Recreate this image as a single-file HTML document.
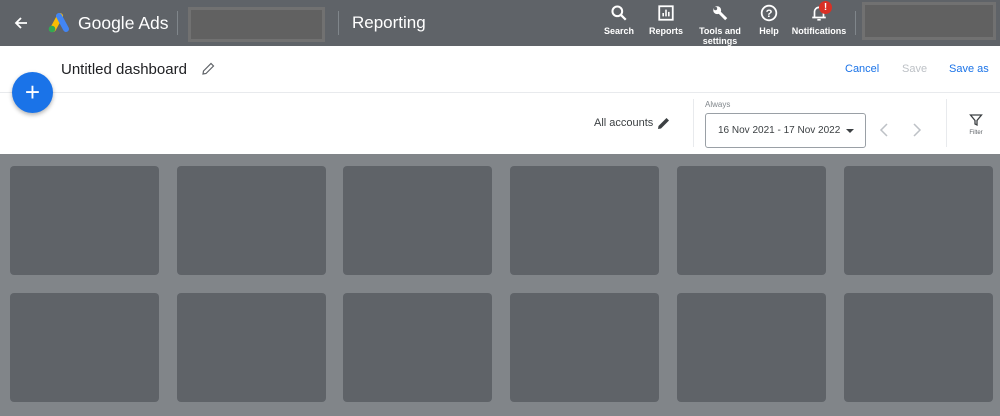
<!DOCTYPE html>
<html><head><style>
*{box-sizing:border-box;margin:0;padding:0}
body{width:1000px;height:416px;overflow:hidden;font-family:"Liberation Sans",Arial,sans-serif;background:#818589;position:relative}
.hdr{position:absolute;left:0;top:0;width:1000px;height:46px;background:#5f6368;color:#fff}
.abs{position:absolute}
.nav{position:absolute;top:4px;text-align:center;font-size:9px;font-weight:bold;color:#fff;line-height:10px}
.nav svg{margin-bottom:2px}
.white{position:absolute;left:0;top:46px;width:1000px;height:108px;background:#fff}
.tile{position:absolute;width:149px;height:109px;background:#5f6368;border-radius:4px}
</style></head><body>
<div class="hdr">
 <svg class="abs" style="left:13px;top:15px" width="16" height="16" viewBox="0 0 16 16"><path d="M14 8H3M8 3L3 8l5 5" stroke="#fff" stroke-width="1.8" fill="none"/></svg>
 <svg class="abs" style="left:47px;top:12px" width="23" height="21" viewBox="0 0 23 21"><path d="M6 17L13 4" stroke="#fbbc04" stroke-width="6" stroke-linecap="round"/><path d="M12 4l7 13" stroke="#4285f4" stroke-width="6" stroke-linecap="round"/><circle cx="5" cy="17" r="3.3" fill="#34a853"/></svg>
 <div class="abs" style="left:78px;top:13px;font-size:17.5px;color:#fff">Google Ads</div>
 <div class="abs" style="left:177px;top:11px;width:1px;height:24px;background:#80868b"></div>
 <div class="abs" style="left:188px;top:7px;width:137px;height:35px;background:#616161;border:3px solid #717171"></div>
 <div class="abs" style="left:338px;top:11px;width:1px;height:24px;background:#80868b"></div>
 <div class="abs" style="left:352px;top:13px;font-size:17px;color:#fff">Reporting</div>
 <div class="nav" style="left:600px;width:38px"><svg width="18" height="18" viewBox="0 0 16 16"><circle cx="6.5" cy="6.5" r="4.3" stroke="#fff" stroke-width="1.8" fill="none"/><path d="M9.5 9.5L14 14" stroke="#fff" stroke-width="2"/></svg><br>Search</div>
 <div class="nav" style="left:646px;width:40px"><svg width="18" height="18" viewBox="0 0 16 16"><rect x="2" y="2" width="12" height="12" stroke="#fff" stroke-width="1.6" fill="none"/><path d="M5.5 11V8M8 11V5M10.5 11V7" stroke="#fff" stroke-width="1.4"/></svg><br>Reports</div>
 <div class="nav" style="left:696px;width:48px"><svg width="18" height="18" viewBox="0 0 16 16"><circle cx="5.5" cy="5.5" r="3.5" fill="#fff"/><path d="M6 6l7.5 7.5" stroke="#fff" stroke-width="2.6"/><circle cx="4" cy="4" r="1.5" fill="#5f6368"/></svg><br>Tools and<br>settings</div>
 <div class="nav" style="left:756px;width:26px"><svg width="18" height="18" viewBox="0 0 16 16"><circle cx="8" cy="8" r="6.5" stroke="#fff" stroke-width="1.6" fill="none"/><text x="8" y="11.5" font-size="10" font-weight="bold" fill="#fff" text-anchor="middle" font-family="Liberation Sans">?</text></svg><br>Help</div>
 <div class="nav" style="left:791px;width:56px"><svg width="18" height="18" viewBox="0 0 16 16"><path d="M4 12V7a4 4 0 018 0v5h2H2z" stroke="#fff" stroke-width="1.5" fill="none"/><path d="M6.5 14h3" stroke="#fff" stroke-width="1.5"/></svg><br>Notifications</div>
 <div class="abs" style="left:819px;top:1px;width:13px;height:13px;border-radius:50%;background:#d93025;color:#fff;font-size:10px;font-weight:bold;text-align:center;line-height:13px">!</div>
 <div class="abs" style="left:855px;top:11px;width:1px;height:24px;background:#80868b"></div>
 <div class="abs" style="left:862px;top:2px;width:134px;height:38px;background:#616161;border:3px solid #717171"></div>
</div>
<div class="white">
 <div class="abs" style="left:61px;top:15px;font-size:15px;color:#202124">Untitled dashboard</div>
 <svg class="abs" style="left:201px;top:16px" width="14" height="14" viewBox="0 0 14 14"><path d="M2 12l0.5-3L10 1.5l2.5 2.5L5 11.5z" stroke="#5f6368" stroke-width="1.2" fill="none"/></svg>
 <div class="abs" style="left:845px;top:17px;font-size:11px;color:#1a73e8">Cancel</div>
 <div class="abs" style="left:902px;top:17px;font-size:11px;color:#bdc1c6">Save</div>
 <div class="abs" style="left:949px;top:17px;font-size:11px;color:#1a73e8">Save as</div>
 <div class="abs" style="left:0;top:46px;width:1000px;height:1px;background:#e8eaed"></div>
 <div class="abs" style="left:594px;top:71px;font-size:11px;color:#3c4043">All accounts</div>
 <svg class="abs" style="left:657px;top:70px" width="14" height="14" viewBox="0 0 14 14"><path d="M1 13l0.5-3L9.5 2l2.5 2.5L4 12.5z" fill="#3c4043"/></svg>
 <div class="abs" style="left:693px;top:53px;width:1px;height:48px;background:#e8eaed"></div>
 <div class="abs" style="left:705px;top:54px;font-size:8px;color:#80868b">Always</div>
 <div class="abs" style="left:705px;top:67px;width:161px;height:35px;border:1px solid #9aa0a6;border-radius:3px;font-size:10px;color:#3c4043;padding:11px 0 0 12px">16 Nov 2021 - 17 Nov 2022</div>
 <div class="abs" style="left:846px;top:83px;border:4px solid transparent;border-top:4px solid #3c4043;border-bottom:0"></div>
 <svg class="abs" style="left:877px;top:76px" width="14" height="16" viewBox="0 0 14 16"><path d="M10 2L4 8l6 6" stroke="#bdc1c6" stroke-width="1.5" fill="none"/></svg>
 <svg class="abs" style="left:910px;top:76px" width="14" height="16" viewBox="0 0 14 16"><path d="M4 2l6 6-6 6" stroke="#bdc1c6" stroke-width="1.5" fill="none"/></svg>
 <div class="abs" style="left:946px;top:53px;width:1px;height:48px;background:#e8eaed"></div>
 <svg class="abs" style="left:969px;top:67px" width="14" height="14" viewBox="0 0 14 14"><path d="M1.5 2h11L8 7.5V12L6 11V7.5z" stroke="#3c4043" stroke-width="1.3" fill="none"/></svg>
 <div class="abs" style="left:960px;top:84px;width:32px;text-align:center;font-size:6px;color:#5f6368">Filter</div>
</div>
<div class="abs" style="left:12px;top:72px;width:41px;height:41px;border-radius:50%;background:#1a73e8;box-shadow:0 2px 4px rgba(0,0,0,.3);color:#fff;font-size:26px;text-align:center;line-height:40px">+</div>
<div class="tile" style="left:10px;top:166px"></div><div class="tile" style="left:177px;top:166px"></div><div class="tile" style="left:343px;top:166px"></div><div class="tile" style="left:510px;top:166px"></div><div class="tile" style="left:677px;top:166px"></div><div class="tile" style="left:844px;top:166px"></div>
<div class="tile" style="left:10px;top:293px"></div><div class="tile" style="left:177px;top:293px"></div><div class="tile" style="left:343px;top:293px"></div><div class="tile" style="left:510px;top:293px"></div><div class="tile" style="left:677px;top:293px"></div><div class="tile" style="left:844px;top:293px"></div>
</body></html>
